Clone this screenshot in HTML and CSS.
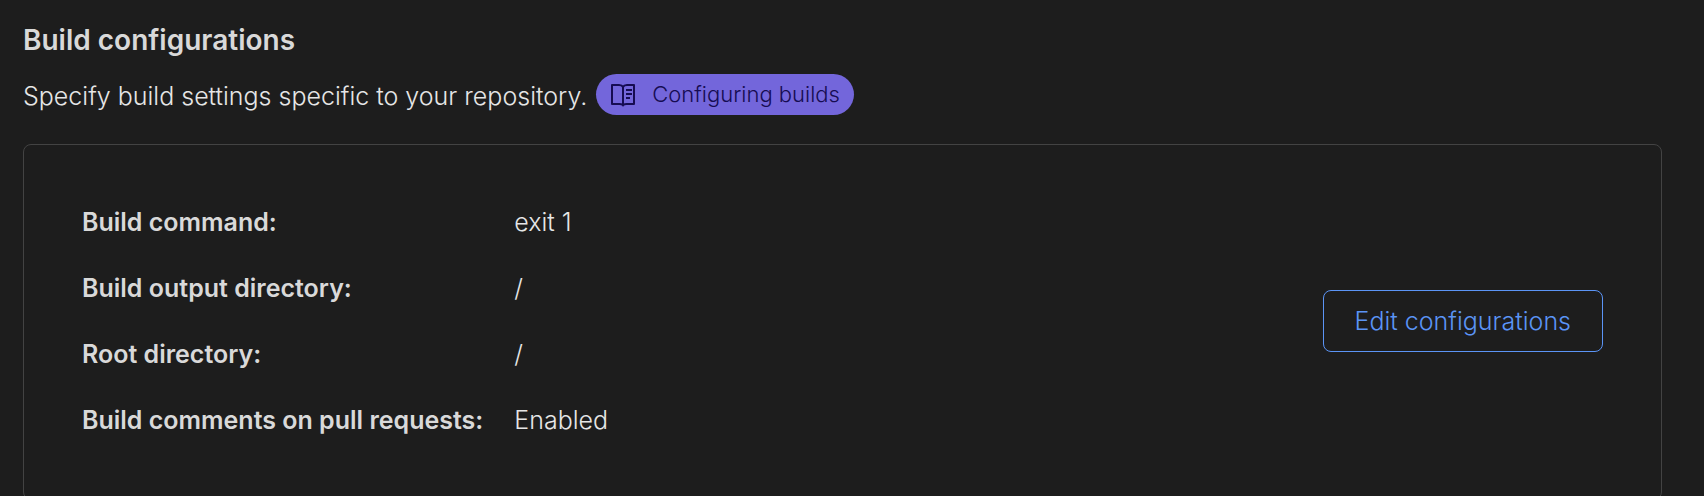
FILE: index.html
```html
<!DOCTYPE html>
<html lang="en">

<head>
    <meta charset="UTF-8">
    <meta name="viewport" content="width=device-width, initial-scale=1.0">
    <title>Build configurations</title>
    <link rel="stylesheet" href="styles.css">
</head>

<body>
    <section class="settings">
        <h2 class="settings-title">Build configurations</h2>
        <div class="settings-intro">
            <p class="settings-text">Specify build settings specific to your repository.</p>
            <a class="docs-link" href="#">
                <svg class="docs-icon" viewBox="0 0 26 24" aria-hidden="true">
                    <path d="M13 4C12 2 10.500 2 9 2H2v19h7.500c1.500 0 3 0 3.500 1.500.5-1.500 2-1.500 3.500-1.500H24V2h-7c-1.500 0-3 0-4 2zM13 4V22" />
                    <path d="M16 7H22M16 11H22M16 15H20" />
                </svg>
                Configuring builds
            </a>
        </div>

        <div class="config-card">
            <table class="config-table">
                <tbody>
                    <tr>
                        <th scope="row">Build command:</th>
                        <td>exit 1</td>
                    </tr>
                    <tr>
                        <th scope="row">Build output directory:</th>
                        <td>/</td>
                    </tr>
                    <tr>
                        <th scope="row">Root directory:</th>
                        <td>/</td>
                    </tr>
                    <tr>
                        <th scope="row">Build comments on pull requests:</th>
                        <td>Enabled</td>
                    </tr>
                </tbody>
            </table>
            <button class="edit-button" type="button">Edit configurations</button>
        </div>
    </section>
</body>

</html>
```

FILE: styles.css
```css
html {
    overflow: hidden;
}

body {
    margin: 0;
    background-color: #1d1d1d;
    color: #e6e6e6;
    font-family: Inter, "Liberation Sans", sans-serif;
    font-size: 25px;
    font-weight: 300;
    line-height: 38px;
}

.settings {
    padding: 21px 42px 20px 23px;
}

.settings-title {
    margin: 0 0 15px;
    color: #d9d9d9;
    font-size: 28px;
    font-weight: 600;
    line-height: 38px;
}

.settings-intro {
    display: flex;
    flex-wrap: wrap;
    align-items: flex-end;
    gap: 9px;
    margin-bottom: 29px;
}

.settings-text {
    margin: 0;
}

.docs-link {
    display: inline-flex;
    align-items: center;
    gap: 16px;
    padding: 0 14px;
    border-radius: 24px;
    background-color: #7366db;
    color: #160c52;
    font-size: 22px;
    line-height: 41px;
    text-decoration: none;
}

.docs-icon {
    width: 26px;
    height: 24px;
    fill: none;
    stroke: currentColor;
    stroke-width: 2;
    stroke-linejoin: round;
}

.config-card {
    display: flex;
    align-items: center;
    justify-content: space-between;
    padding: 44px 58px 46px;
    border: 1px solid #434343;
    border-radius: 8px;
}

.config-table {
    border-collapse: collapse;
}

.config-table th,
.config-table td {
    height: 66px;
    padding: 0;
    text-align: left;
}

.config-table th {
    padding-right: 31px;
    color: #d9d9d9;
    font-weight: 600;
}

.edit-button {
    padding: 11px 31px;
    border: 1px solid #5b94f5;
    border-radius: 8px;
    background-color: transparent;
    color: #5b94f5;
    font: inherit;
    cursor: pointer;
}
```
